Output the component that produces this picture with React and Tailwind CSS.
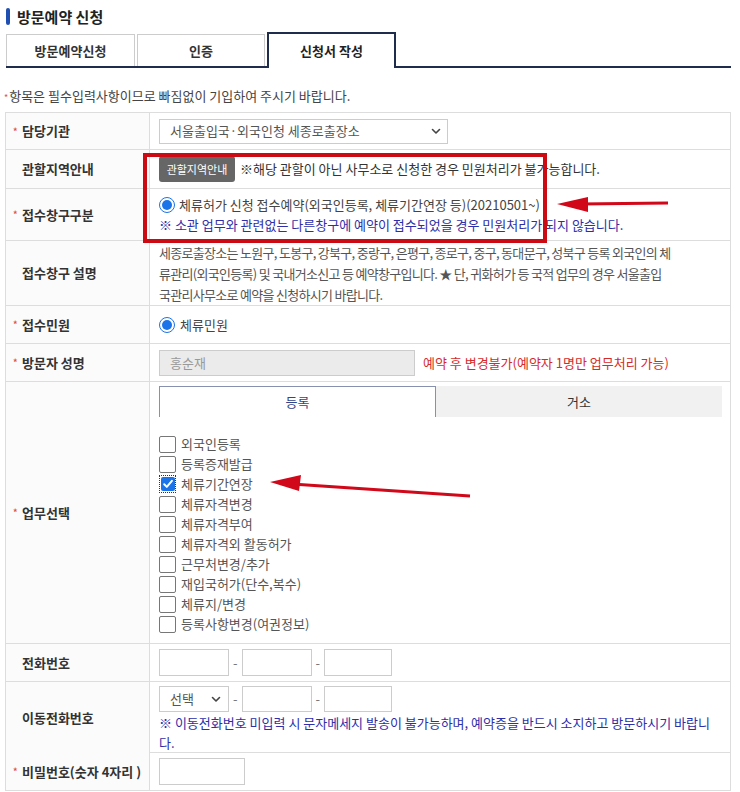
import React from 'react';

const Chevron = ({ className }) => (
  <svg className={className} width="10" height="7" viewBox="0 0 10 7" fill="none">
    <path d="M1.5 1.5 L5 5 L8.5 1.5" stroke="#444" strokeWidth="1.6" strokeLinecap="round" strokeLinejoin="round" />
  </svg>
);

const Radio = () => (
  <span className="flex items-center justify-center w-[16px] h-[16px] rounded-full border-[1.5px] border-[#1a73e8] bg-white shrink-0">
    <span className="w-[10px] h-[10px] rounded-full bg-[#1a73e8]"></span>
  </span>
);

const Checkbox = ({ checked }) =>
  checked ? (
    <span className="flex items-center justify-center w-[17px] h-[18px] border border-dotted border-[#333] shrink-0">
      <span className="flex items-center justify-center w-[14px] h-[14px] rounded-[2px] bg-[#1a73e8]">
        <svg width="12" height="12" viewBox="0 0 12 12" fill="none">
          <path d="M2.2 6.3 L4.8 8.9 L9.9 2.8" stroke="white" strokeWidth="2" strokeLinecap="round" strokeLinejoin="round" />
        </svg>
      </span>
    </span>
  ) : (
    <span className="w-[17px] h-[17px] rounded-[2px] border border-[#777] bg-white shrink-0"></span>
  );

const Row = ({ label, star, h, children, className = '' }) => (
  <div className={`grid grid-cols-[145px_581px] border-b border-[#ddd] ${h}`}>
    <div className="flex items-center pl-[7px] bg-[#fbfbfb] border-l border-r border-[#ddd] text-[13px] font-semibold text-[#333] whitespace-nowrap">
      <span className="w-[9px] text-[9px] text-[#e0524d] leading-none">{star ? '*' : ''}</span>
      {label}
    </div>
    <div className={`border-r border-[#ddd] pl-[9px] ${className}`}>{children}</div>
  </div>
);

const tasks = [
  '외국인등록',
  '등록증재발급',
  '체류기간연장',
  '체류자격변경',
  '체류자격부여',
  '체류자격외 활동허가',
  '근무처변경/추가',
  '재입국허가(단수,복수)',
  '체류지/변경',
  '등록사항변경(여권정보)',
];

const Input = ({ w, h = 'h-[27px]' }) => <span className={`block border border-[#ccc] bg-white ${w} ${h}`}></span>;

const Dash = () => <span className="mx-[4px] text-[#777]">-</span>;

export default function App() {
  return (
    <div className="relative w-[740px] h-[792px] overflow-hidden bg-white font-['Noto_Sans_CJK_KR','Malgun_Gothic',sans-serif] text-[#444]">
      {/* Title */}
      <div className="flex items-center gap-[7px] pl-[6px] pt-[5px] h-[27px]">
        <span className="w-[4px] h-[17px] rounded-[2px] bg-[#1f4fb0]"></span>
        <h1 className="text-[15px] font-semibold text-[#222] leading-none">방문예약 신청</h1>
      </div>

      {/* Tabs */}
      <div className="mt-[7px] ml-[6px] w-[725px] h-[34px] flex items-end gap-[2px] border-b-2 border-[#1f2c4c]">
        <div className="w-[129px] h-[32px] flex items-center justify-center border border-b-0 border-[#ccc] text-[13px] font-semibold text-[#333]">방문예약신청</div>
        <div className="w-[128px] h-[32px] flex items-center justify-center border border-b-0 border-[#ccc] text-[13px] font-semibold text-[#333]">인증</div>
        <div className="w-[129px] h-[36px] -mb-[2px] flex items-center justify-center border-2 border-b-0 border-[#1f2c4c] bg-white text-[13px] font-semibold text-[#222]">신청서 작성</div>
      </div>

      <p className="mt-[19px] h-[18px] leading-[18px] pl-[4px] text-[13px] text-[#444]">
        <span className="text-[#e0524d] text-[9px] mr-[1px]">*</span>항목은 필수입력사항이므로 빠짐없이 기입하여 주시기 바랍니다.
      </p>

      {/* Form table */}
      <div className="mt-[7px] ml-[5px] w-[726px] border-t border-[#ddd] text-[13px]">
        <Row label="담당기관" star h="h-[37px]" className="flex items-center">
          <div className="w-[289px] h-[25px] border border-[#ccc] flex items-center justify-between pl-[10px] pr-[6px] text-[#555]">
            <span>서울출입국·외국인청 세종로출장소</span>
            <Chevron />
          </div>
        </Row>

        <Row label="관할지역안내" h="h-[39px]" className="flex items-center">
          <span className="w-[76px] h-[26px] flex items-center justify-center rounded-[3px] bg-[#666] text-white text-[11px]">관할지역안내</span>
          <span className="ml-[5px] text-[#333]">※해당 관할이 아닌 사무소로 신청한 경우 민원처리가 불가능합니다.</span>
        </Row>

        <Row label="접수창구구분" star h="h-[52px]" className="flex flex-col justify-center leading-[20px]">
          <div className="flex items-center gap-[4px] text-[#444]">
            <Radio />
            <span>체류허가 신청 접수예약(외국인등록, 체류기간연장 등)(20210501~)</span>
          </div>
          <div className="text-[#2e2ea8]">※ 소관 업무와 관련없는 다른창구에 예약이 접수되었을 경우 민원처리가 되지 않습니다.</div>
        </Row>

        <Row label="접수창구 설명" h="h-[65px]" className="flex items-center">
          <p className="leading-[21px] text-[#555] whitespace-nowrap tracking-[-0.7px]">
            세종로출장소는 노원구, 도봉구, 강북구, 중랑구, 은평구, 종로구, 중구, 동대문구, 성북구 등록 외국인의 체<br />
            류관리(외국인등록) 및 국내거소신고 등 예약창구입니다. ★ 단, 귀화허가 등 국적 업무의 경우 서울출입<br />
            국관리사무소로 예약을 신청하시기 바랍니다.
          </p>
        </Row>

        <Row label="접수민원" star h="h-[38px]" className="flex items-center gap-[5px]">
          <Radio />
          <span className="text-[#444]">체류민원</span>
        </Row>

        <Row label="방문자 성명" star h="h-[38px]" className="flex items-center">
          <span className="w-[256px] h-[26px] flex items-center pl-[10px] border border-[#ccc] bg-[#ebebeb] text-[#999]">홍순재</span>
          <span className="ml-[8px] text-[#d62a2a]">예약 후 변경불가(예약자 1명만 업무처리 가능)</span>
        </Row>

        <Row label="업무선택" star h="h-[262px]" className="pt-[4px]">
          <div className="flex w-[563px] h-[31px]">
            <div className="w-[277px] flex items-center justify-center border border-b-0 border-[#8890b0] text-[#334488]">등록</div>
            <div className="flex-1 flex items-center justify-center bg-[#f1f1f1] text-[#333]">거소</div>
          </div>
          <ul className="mt-[17px] text-[#555]">
            {tasks.map((t, i) => (
              <li key={t} className="h-[20px] flex items-center gap-[5px]">
                <Checkbox checked={i === 2} />
                <span>{t}</span>
              </li>
            ))}
          </ul>
        </Row>

        <Row label="전화번호" h="h-[38px]" className="flex items-center">
          <Input w="w-[70px]" />
          <Dash />
          <Input w="w-[70px]" />
          <Dash />
          <Input w="w-[68px]" />
        </Row>

        <Row label="이동전화번호" h="h-[71px]" className="pt-[4px]">
          <div className="flex items-center">
            <span className="w-[70px] h-[26px] flex items-center justify-between pl-[10px] pr-[7px] border border-[#ccc] text-[#555]">
              <span>선택</span>
              <Chevron />
            </span>
            <Dash />
            <Input w="w-[70px]" h="h-[26px]" />
            <Dash />
            <Input w="w-[68px]" h="h-[26px]" />
          </div>
          <p className="mt-[1px] leading-[20px] text-[#2e2ea8] pr-[4px] whitespace-nowrap">
            ※ 이동전화번호 미입력 시 문자메세지 발송이 불가능하며, 예약증을 반드시 소지하고 방문하시기 바랍니<br />다.
          </p>
        </Row>

        <Row label="비밀번호(숫자 4자리 )" star h="h-[38px]" className="flex items-center">
          <Input w="w-[86px]" />
        </Row>
      </div>

      {/* Annotation overlay */}
      <div className="absolute left-[143px] top-[153px] w-[404px] h-[90px] border-4 border-[#cc0a14] pointer-events-none"></div>
      <svg className="absolute inset-0 pointer-events-none" width="740" height="792" viewBox="0 0 740 792">
        <line x1="668" y1="203" x2="580" y2="204" stroke="#d0081a" strokeWidth="3.2" />
        <polygon points="557,204 588,197 588,212" fill="#d0081a" />
        <line x1="470" y1="496" x2="292" y2="484" stroke="#d0081a" strokeWidth="3.2" />
        <polygon points="270,482 301,475 299,491" fill="#d0081a" />
      </svg>
    </div>
  );
}
